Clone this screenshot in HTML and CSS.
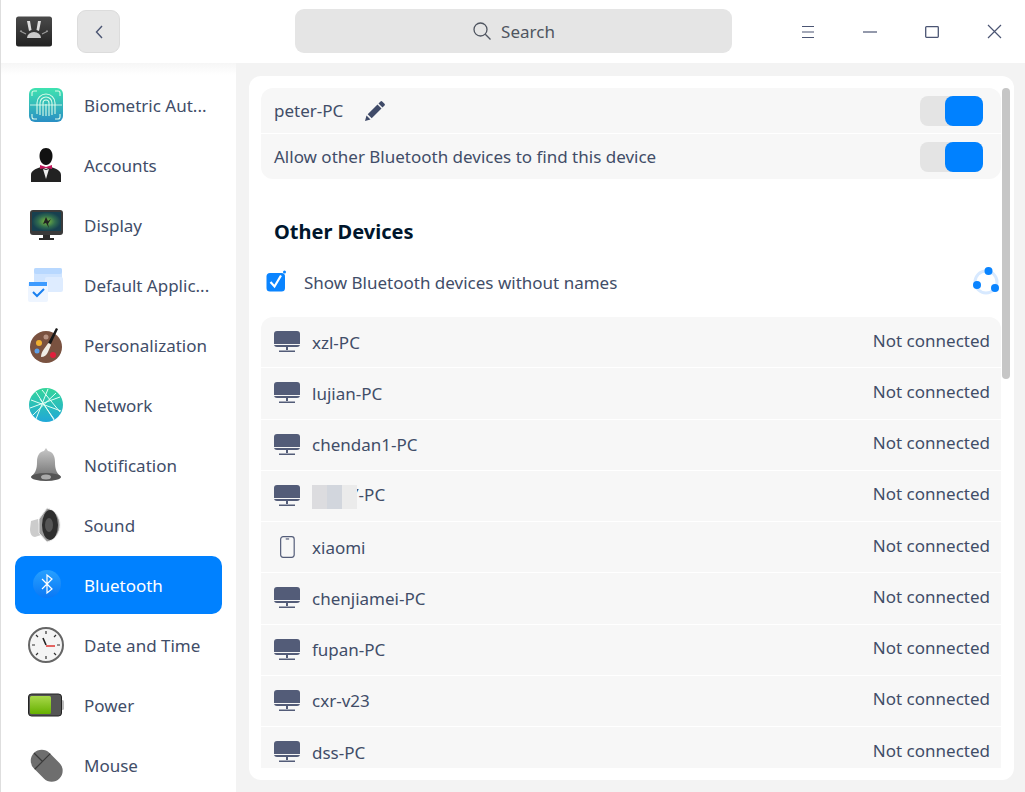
FILE: index.html
```html
<!DOCTYPE html>
<html lang="en">
<head>
<meta charset="utf-8">
<title>Control Center</title>
<link rel="stylesheet" href="styles.css">
</head>
<body>
<div class="window">
  <header class="titlebar">
    <div class="tb-left">
      <svg class="applogo" width="36" height="31" viewBox="0 0 36 31"><defs><linearGradient id="lg" x1="0" y1="0" x2="0" y2="1"><stop offset="0" stop-color="#4a4a4a"/><stop offset="1" stop-color="#222"/></linearGradient></defs><rect width="36" height="30" y="0.5" rx="2.5" fill="url(#lg)"/><path d="M11 5h3l1.500 9-2.500 1zM22 5h3l-2 10-2.500-1z" fill="#ddd"/><path d="M11 22a7 6 0 0 1 14 0z" fill="#ccc"/><path d="M4 15l6 3M4 15l2 0M32 15l-6 3M32 15l-2 0" stroke="#999" stroke-width="1.200" fill="none"/></svg>
      <button class="backbtn" aria-label="Back"><svg width="10" height="16" viewBox="0 0 10 16"><path d="M8 2L2.500 8 8 14" fill="none" stroke="#4b5573" stroke-width="1.400"/></svg></button>
    </div>
    <div class="search">
      <svg width="20" height="20" viewBox="0 0 20 20"><circle cx="8.500" cy="8.500" r="6.500" fill="none" stroke="#4f5560" stroke-width="1.300"/><path d="M13.300 13.300L18.500 18.500" stroke="#4f5560" stroke-width="1.300"/></svg>
      <span>Search</span>
    </div>
    <div class="winbtns">
      <svg width="14" height="14" viewBox="0 0 14 14"><path d="M1 1.500h12M1 7h12M1 12.500h12" stroke="#4b5573" stroke-width="1.200"/></svg>
      <svg width="14" height="14" viewBox="0 0 14 14"><path d="M0 7h14" stroke="#4b5573" stroke-width="1.200"/></svg>
      <svg width="14" height="14" viewBox="0 0 14 14"><rect x="0.700" y="1.700" width="12.600" height="10.600" rx="0.800" fill="none" stroke="#4b5573" stroke-width="1.300"/></svg>
      <svg width="15" height="15" viewBox="0 0 15 15"><path d="M1 1l13 13M14 1L1 14" stroke="#4b5573" stroke-width="1.200"/></svg>
    </div>
  </header>
  <div class="body">
    <nav class="sidebar">
      <div class="navitem">
        <svg class="navicon" viewBox="0 0 36 36"><defs><linearGradient id="fp" x1="0" y1="0" x2="0" y2="1"><stop offset="0" stop-color="#3fe3b0"/><stop offset="1" stop-color="#2a8fc4"/></linearGradient></defs><rect x="1" y="1" width="34" height="34" rx="6" fill="url(#fp)"/><g fill="none" stroke="#d9fbe8" stroke-width="1.100"><path d="M9 27V16a9 9 0 0 1 18 0v11M12 28V16a6 6 0 0 1 12 0v12M15 29V16a3 3 0 0 1 6 0v13M18 17v12"/><path d="M4 9V6a2 2 0 0 1 2-2h3M27 4h3a2 2 0 0 1 2 2v3M32 27v3a2 2 0 0 1-2 2h-3M9 32H6a2 2 0 0 1-2-2v-3"/></g><path d="M2 18h32" stroke="#e6fff2" stroke-width=".8"/></svg>
        <span>Biometric Aut...</span>
      </div>
      <div class="navitem">
        <svg class="navicon" viewBox="0 0 36 36"><path d="M18 1c4 0 6.500 3.500 6.500 8s-2.500 9-6.500 9-6.500-4.500-6.500-9S14 1 18 1z" fill="#111"/><path d="M3 35v-7c0-4 4-6 10-8l5 2 5-2c6 2 10 4 10 8v7z" fill="#222"/><path d="M15 22l3 10 3-10-3 1z" fill="#eee"/><path d="M12 18l6 2 6-2v4l-6-1-6 1z" fill="#c2185b"/></svg>
        <span>Accounts</span>
      </div>
      <div class="navitem">
        <svg class="navicon" viewBox="0 0 36 36"><defs><radialGradient id="dsp"><stop offset="0" stop-color="#7fbf3f"/><stop offset=".6" stop-color="#2f6b4f"/><stop offset="1" stop-color="#17404f"/></radialGradient></defs><rect x="2" y="3" width="33" height="25" rx="3" fill="#3a3a3a"/><rect x="4" y="5" width="29" height="19" fill="url(#dsp)"/><path d="M18 10l2 4 3-2-3 5 1 4-3-5-3 1z" fill="#222"/><path d="M15 28h7v3h4v2H11v-2h4z" fill="#2b2b2b"/></svg>
        <span>Display</span>
      </div>
      <div class="navitem">
        <svg class="navicon" viewBox="0 0 36 36"><rect x="6" y="1" width="28" height="20" rx="2" fill="#cfe4ff"/><rect x="6" y="1" width="28" height="6" rx="2" fill="#b8d8ff"/><rect x="23" y="10" width="18" height="15" rx="2" fill="#deecff" transform="translate(-6 0)"/><rect x="0" y="15" width="20" height="20" rx="2" fill="#eef5ff"/><rect x="1" y="15" width="18" height="4" fill="#3d9bff"/><path d="M5 25l4 4 7-7" fill="none" stroke="#1a80f0" stroke-width="2"/></svg>
        <span>Default Applic...</span>
      </div>
      <div class="navitem">
        <svg class="navicon" viewBox="0 0 36 36"><circle cx="18" cy="20" r="16" fill="#7a5240"/><circle cx="11" cy="16" r="3" fill="#f0b030"/><circle cx="9" cy="24" r="2.500" fill="#5ea0e8"/><circle cx="25" cy="28" r="3" fill="#e0203c"/><circle cx="18" cy="10" r="2.500" fill="#b89484"/><path d="M21 15l-5 7c-2 3-3 5-3 8 3 0 6-2 7-5l3-7z" fill="#f0ece4"/><path d="M28 1l2 1-7 15-3-1z" fill="#181818"/></svg>
        <span>Personalization</span>
      </div>
      <div class="navitem">
        <svg class="navicon" viewBox="0 0 36 36"><defs><linearGradient id="net" x1="0" y1="0" x2="0" y2="1"><stop offset="0" stop-color="#35d69a"/><stop offset="1" stop-color="#20a8d8"/></linearGradient></defs><circle cx="18" cy="18" r="17" fill="url(#net)"/><path d="M3 13l30 11M8 5l18 28M20 2L8 32M2 21l30-11M14 3l18 22M5 28L28 6M12 12l14 20" stroke="#e4fff5" stroke-width="1" fill="none"/></svg>
        <span>Network</span>
      </div>
      <div class="navitem">
        <svg class="navicon" viewBox="0 0 36 36"><defs><linearGradient id="bell" x1="0" y1="0" x2="0" y2="1"><stop offset="0" stop-color="#c8c8c8"/><stop offset="1" stop-color="#777"/></linearGradient></defs><path d="M18 1l2 3c5 1 7 5 7 11 0 6 1 10 5 14H4c4-4 5-8 5-14 0-6 2-10 7-11z" fill="url(#bell)"/><ellipse cx="18" cy="30" rx="15" ry="4" fill="#555"/><ellipse cx="18" cy="30" rx="5" ry="2.500" fill="#aaa"/></svg>
        <span>Notification</span>
      </div>
      <div class="navitem">
        <svg class="navicon" viewBox="0 0 36 36"><path d="M3 14l7-2 3 16-6 2c-3 0-5-3-5-8z" fill="#ccc"/><path d="M11 12L19 1c8 2 13 9 13 17s-5 15-13 17l-8-9z" fill="#999" stroke="#eee"/><ellipse cx="22" cy="18" rx="8" ry="15" fill="#2e2e2e"/><ellipse cx="21" cy="18" rx="4" ry="7" fill="#555"/></svg>
        <span>Sound</span>
      </div>
      <div class="navitem active">
        <svg class="navicon" viewBox="0 0 36 36"><defs><linearGradient id="bt" x1="0" y1="0" x2="0" y2="1"><stop offset="0" stop-color="#27a0ff"/><stop offset="1" stop-color="#0a78f5"/></linearGradient></defs><circle cx="19" cy="17" r="14" fill="url(#bt)"/><path d="M14 12l10 10-5 4V8l5 4-10 10" fill="none" stroke="#fff" stroke-width="1.200"/></svg>
        <span>Bluetooth</span>
      </div>
      <div class="navitem">
        <svg class="navicon" viewBox="0 0 36 36"><circle cx="18" cy="18" r="17" fill="#f4f4f4" stroke="#666" stroke-width="2"/><path d="M18 4v3M18 29v3M4 18h3M29 18h3M8 8l2 2M26 26l2 2M28 8l-2 2M10 26l-2 2" stroke="#333" stroke-width="1.200"/><path d="M18 18l-3-7" stroke="#222" stroke-width="1.600"/><path d="M18 19h9" stroke="#e0403c" stroke-width="1.600"/></svg>
        <span>Date and Time</span>
      </div>
      <div class="navitem">
        <svg class="navicon" viewBox="0 0 36 36"><defs><linearGradient id="bat" x1="0" y1="0" x2="0" y2="1"><stop offset="0" stop-color="#a8d84a"/><stop offset="1" stop-color="#66b000"/></linearGradient></defs><rect x="33" y="13" width="3" height="10" rx="1.500" fill="#bbb"/><rect x="0.500" y="7" width="33" height="22" rx="3" fill="#555" stroke="#222"/><rect x="2" y="9" width="21" height="18" rx="1.500" fill="url(#bat)"/></svg>
        <span>Power</span>
      </div>
      <div class="navitem">
        <svg class="navicon" viewBox="0 0 36 36"><g transform="rotate(-45 18 18)"><rect x="7" y="1" width="22" height="36" rx="11" fill="#6e6e6e"/><path d="M7 13h22M18 1v12" stroke="#3a3a3a" stroke-width="1.200"/></g></svg>
        <span>Mouse</span>
      </div>
    </nav>
    <main class="content">
      <div class="panel">
        <div class="scroller">
          <section class="settings">
            <div class="setrow">
              <div class="setname"><span>peter-PC</span>
                <svg width="20" height="20" viewBox="0 0 20 20"><path d="M0 20l1.500-5.500 4 4zM2.700 13.300L12.500 3.500l4 4-9.800 9.800zM13.500 2.500L15.500.5a1.200 1.200 0 0 1 1.700 0l2.300 2.300a1.200 1.200 0 0 1 0 1.700l-2 2z" fill="#3f4a68"/></svg>
              </div>
              <div class="switch"><i></i></div>
            </div>
            <div class="setrow">
              <span>Allow other Bluetooth devices to find this device</span>
              <div class="switch"><i></i></div>
            </div>
          </section>
          <h2 class="heading">Other Devices</h2>
          <div class="showrow">
            <label class="check">
              <svg width="22" height="22" viewBox="0 0 22 22"><rect x="0.500" y="3" width="18.500" height="18.500" rx="3.500" fill="#0a84ff"/><path d="M4.500 12l4 4.500 6.500-11" fill="none" stroke="#fff" stroke-width="2.200"/><circle cx="18.500" cy="2" r="1.500" fill="#0a84ff"/></svg>
              <span>Show Bluetooth devices without names</span>
            </label>
            <svg class="spinner" width="30" height="30" viewBox="0 0 30 30"><circle cx="15" cy="15" r="11" fill="none" stroke="#d7e9ff" stroke-width="3"/><circle cx="17.500" cy="4" r="4" fill="#0a84ff"/><circle cx="6" cy="18" r="4" fill="#0a84ff"/><circle cx="24" cy="21" r="4" fill="#0a84ff"/></svg>
          </div>
          <ul class="devices">
            <li class="device"><svg class="pc" viewBox="0 0 26 22"><path d="M3 0h20a3 3 0 0 1 3 3v10a3 3 0 0 1-3 3H3a3 3 0 0 1-3-3V3a3 3 0 0 1 3-3z" fill="#535c78"/><path d="M0 13.500h26" stroke="#f7f7f7" stroke-width="1"/><path d="M12 16h2v3h-2zM5 19.500h16V21H5z" fill="#535c78"/></svg><span class="dname">xzl-PC</span><span class="state">Not connected</span></li>
            <li class="device"><svg class="pc" viewBox="0 0 26 22"><path d="M3 0h20a3 3 0 0 1 3 3v10a3 3 0 0 1-3 3H3a3 3 0 0 1-3-3V3a3 3 0 0 1 3-3z" fill="#535c78"/><path d="M0 13.500h26" stroke="#f7f7f7" stroke-width="1"/><path d="M12 16h2v3h-2zM5 19.500h16V21H5z" fill="#535c78"/></svg><span class="dname">lujian-PC</span><span class="state">Not connected</span></li>
            <li class="device"><svg class="pc" viewBox="0 0 26 22"><path d="M3 0h20a3 3 0 0 1 3 3v10a3 3 0 0 1-3 3H3a3 3 0 0 1-3-3V3a3 3 0 0 1 3-3z" fill="#535c78"/><path d="M0 13.500h26" stroke="#f7f7f7" stroke-width="1"/><path d="M12 16h2v3h-2zM5 19.500h16V21H5z" fill="#535c78"/></svg><span class="dname">chendan1-PC</span><span class="state">Not connected</span></li>
            <li class="device"><svg class="pc" viewBox="0 0 26 22"><path d="M3 0h20a3 3 0 0 1 3 3v10a3 3 0 0 1-3 3H3a3 3 0 0 1-3-3V3a3 3 0 0 1 3-3z" fill="#535c78"/><path d="M0 13.500h26" stroke="#f7f7f7" stroke-width="1"/><path d="M12 16h2v3h-2zM5 19.500h16V21H5z" fill="#535c78"/></svg><span class="dname blurred"><b class="blur"><i></i><i></i><i></i></b>Y-PC</span><span class="state">Not connected</span></li>
            <li class="device"><svg class="pc" viewBox="0 0 26 26"><rect x="5.500" y="0.700" width="16" height="24.600" rx="3" fill="none" stroke="#535c78" stroke-width="1.400"/><path d="M11.500 3.500h4" stroke="#535c78" stroke-width="1.400"/></svg><span class="dname">xiaomi</span><span class="state">Not connected</span></li>
            <li class="device"><svg class="pc" viewBox="0 0 26 22"><path d="M3 0h20a3 3 0 0 1 3 3v10a3 3 0 0 1-3 3H3a3 3 0 0 1-3-3V3a3 3 0 0 1 3-3z" fill="#535c78"/><path d="M0 13.500h26" stroke="#f7f7f7" stroke-width="1"/><path d="M12 16h2v3h-2zM5 19.500h16V21H5z" fill="#535c78"/></svg><span class="dname">chenjiamei-PC</span><span class="state">Not connected</span></li>
            <li class="device"><svg class="pc" viewBox="0 0 26 22"><path d="M3 0h20a3 3 0 0 1 3 3v10a3 3 0 0 1-3 3H3a3 3 0 0 1-3-3V3a3 3 0 0 1 3-3z" fill="#535c78"/><path d="M0 13.500h26" stroke="#f7f7f7" stroke-width="1"/><path d="M12 16h2v3h-2zM5 19.500h16V21H5z" fill="#535c78"/></svg><span class="dname">fupan-PC</span><span class="state">Not connected</span></li>
            <li class="device"><svg class="pc" viewBox="0 0 26 22"><path d="M3 0h20a3 3 0 0 1 3 3v10a3 3 0 0 1-3 3H3a3 3 0 0 1-3-3V3a3 3 0 0 1 3-3z" fill="#535c78"/><path d="M0 13.500h26" stroke="#f7f7f7" stroke-width="1"/><path d="M12 16h2v3h-2zM5 19.500h16V21H5z" fill="#535c78"/></svg><span class="dname">cxr-v23</span><span class="state">Not connected</span></li>
            <li class="device"><svg class="pc" viewBox="0 0 26 22"><path d="M3 0h20a3 3 0 0 1 3 3v10a3 3 0 0 1-3 3H3a3 3 0 0 1-3-3V3a3 3 0 0 1 3-3z" fill="#535c78"/><path d="M0 13.500h26" stroke="#f7f7f7" stroke-width="1"/><path d="M12 16h2v3h-2zM5 19.500h16V21H5z" fill="#535c78"/></svg><span class="dname">dss-PC</span><span class="state">Not connected</span></li>
          </ul>
        </div>
        <div class="scrollbar"></div>
      </div>
    </main>
  </div>
</div>
</body>
</html>
```
FILE: styles.css
```css
* { box-sizing: border-box; }
html, body { margin: 0; padding: 0; height: 100%; overflow: hidden; }
body { font-family: "Noto Sans", sans-serif; font-size: 17px; color: #414d68; background: #f3f3f3; }
.window { width: 1025px; height: 792px; display: flex; flex-direction: column; border-left: 1px solid #dedede; }
.titlebar { height: 63px; flex: none; background: #fff; display: flex; align-items: center; position: relative; }
.tb-left { display: flex; align-items: center; padding-left: 15px; width: 294px; }
.applogo { flex: none; }
.backbtn { margin-left: 25px; width: 43px; height: 43px; padding: 0; border: 1px solid #dcdcdc; border-radius: 9px; background: #e6e6e6; display: flex; align-items: center; justify-content: center; }
.search { width: 437px; height: 44px; margin-top: -1px; background: #e5e5e5; border-radius: 9px; display: flex; align-items: center; justify-content: center; gap: 9px; color: #4f5560; }
.winbtns { display: flex; align-items: center; margin-left: 69px; gap: 48px; }
.body { flex: 1; display: flex; min-height: 0; }
.sidebar { width: 235px; flex: none; background: linear-gradient(#f6f6f6, #fff 12px); padding: 13px 14px 0; display: flex; flex-direction: column; gap: 2px; overflow: hidden; }
.navitem { height: 58px; flex: none; display: flex; align-items: center; padding-left: 13px; border-radius: 10px; white-space: nowrap; }
.navitem.active { background: #0081ff; color: #fff; }
.navicon { width: 36px; height: 36px; flex: none; margin-right: 20px; }
.content { flex: 1; min-width: 0; padding: 13px 11px 12px 13px; }
.panel { height: 100%; background: #fff; border-radius: 12px; padding: 12px 4px 12px 12px; display: flex; }
.scroller { width: 740px; flex: none; overflow: hidden; }
.settings { background: #f7f7f7; border-radius: 12px; }
.setrow { height: 45px; display: flex; align-items: center; justify-content: space-between; padding: 0 18px 0 13px; }
.setrow + .setrow { border-top: 1px solid #fff; height: 46px; }
.setname { display: flex; align-items: center; gap: 22px; }
.switch { width: 63px; height: 30px; background: #e4e4e4; border-radius: 8px; display: flex; justify-content: flex-end; }
.switch i { width: 38px; height: 30px; background: #0081ff; border-radius: 8px; display: block; }
.heading { margin: 37px 0 0 13px; font-size: 20px; line-height: 32px; font-weight: 700; color: #00162c; }
.showrow { height: 30px; margin-top: 19px; display: flex; align-items: center; justify-content: space-between; padding-left: 5px; padding-right: 0; }
.check { display: flex; align-items: center; gap: 16px; }
.check svg { margin-top: -3px; }
.spinner { margin-right: 0; }
.devices { list-style: none; margin: 20px 0 0; padding: 0; display: flex; flex-direction: column; gap: 1px; }
.device { height: 50.250px; flex: none; background: #f7f7f7; display: flex; align-items: center; padding: 0 11px 0 13px; }
.device:first-child { border-radius: 12px 12px 0 0; }
.pc { width: 26px; height: 22px; flex: none; margin-right: 12px; }
.dname { flex: 1; position: relative; }
.state { margin-top: -4px; }
.blur { display: inline-flex; width: 45px; height: 24px; vertical-align: middle; margin-right: -8px; position: relative; background: #e6e6e6; }
.blur i { flex: 1; background: #dcdcdf; }
.blur i:nth-child(2) { background: #d2d6dd; }
.blur i:nth-child(3) { background: #ebebeb; }
.scrollbar { width: 8px; height: 291px; background: #c6c6c6; border-radius: 4px; margin-left: 1px; flex: none; }
```
